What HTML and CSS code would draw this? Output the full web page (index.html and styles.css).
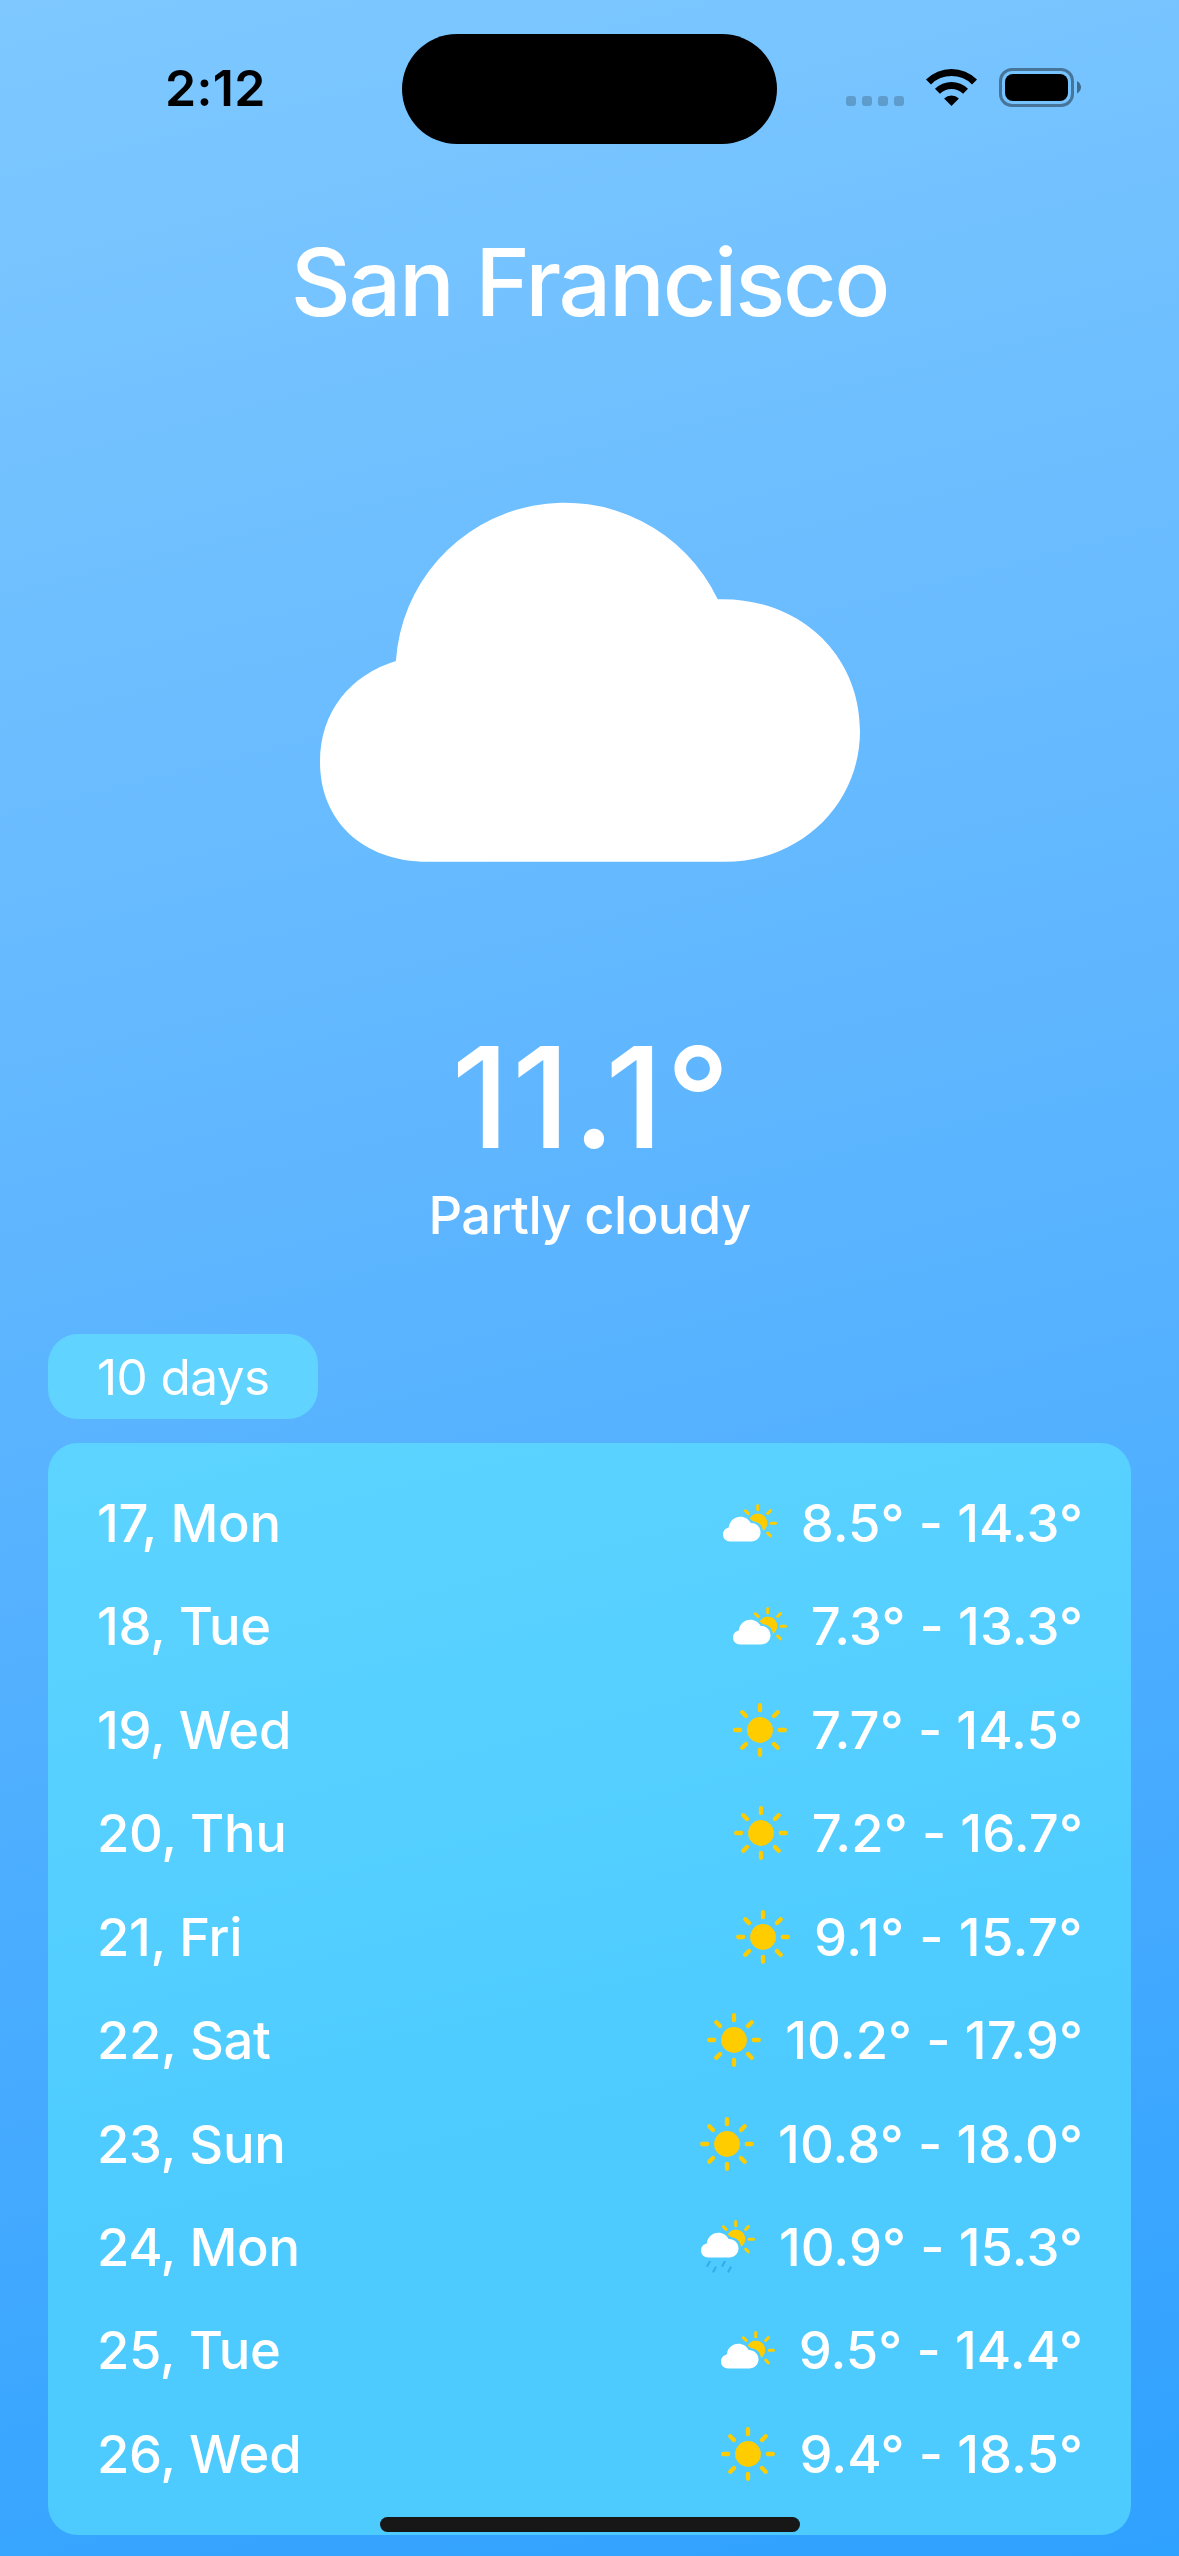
FILE: index.html
```html
<!DOCTYPE html>
<html lang="en">
<head>
<meta charset="utf-8">
<title>Weather</title>
<link rel="stylesheet" href="styles.css">
</head>
<body>
<svg class="sprite" width="0" height="0" aria-hidden="true">
  <defs>
    <symbol id="sun" viewBox="0 0 54 54">
      <circle cx="27" cy="27" r="12.9" fill="#ffcc00"/>
      <path d="M27 2.2v5M27 46.8v5M2.2 27h5M46.8 27h5M9.3 9.3l3.7 3.7M41 41l3.7 3.7M9.3 44.7l3.7-3.7M41 13l3.7-3.7" stroke="#ffcc00" stroke-width="4.3" stroke-linecap="round"/>
    </symbol>
    <symbol id="cloud-sun" viewBox="0 0 54 38">
      <path d="M26.5 14.7A9.4 9.4 0 1 1 40 26.9C39.6 21.400 35.300 17.400 30 17.200C29 16 27.800 15.100 26.500 14.700z" fill="#ffcc00"/>
      <path d="M34.700 1.500v4.200M48.200 19.300h4.300M22.400 6.700l2.700 2.700M44.600 9.500l2.900-2.900M44.700 29.100l2.700 2.700" stroke="#ffcc00" stroke-width="3" stroke-linecap="round"/>
      <path d="M7.300 37.400C3 37.400 0 34.600 0 30.500c0-3.600 2.200-6.200 5.700-7C6.500 17 11.500 12.800 17.200 12.800c4.700 0 8.500 2.500 10.400 6.100 5.600-.1 9.900 3.900 9.900 9.300s-4 9.200-9.400 9.200z" fill="#fff"/>
    </symbol>
    <symbol id="cloud-sun-rain" viewBox="0 0 54 54">
      <use href="#cloud-sun" width="54" height="38"/>
      <path d="M8.700 41.800l-2.300 4M23.700 41.800l-2.300 4M14.700 47.500l-2.300 4M29.700 47.500l-2.300 4" stroke="#32ade6" stroke-width="2.200" stroke-linecap="round"/>
    </symbol>
  </defs>
</svg>
<main class="screen">
  <header class="status">
    <span class="time">2:12</span>
    <div class="island"></div>
    <div class="indicators">
      <div class="signal"><i></i><i></i><i></i><i></i></div>
      <svg class="wifi" width="51" height="38" viewBox="0 0 51 38">
        <path d="M25.500 38l-7.400-7.500a10.700 10.700 0 0 1 14.800 0z"/>
        <path d="M9 20.800a23.500 23.500 0 0 1 33 0l-4.900 5a16.600 16.600 0 0 0-23.200 0z"/>
        <path d="M0 11.500a36 36 0 0 1 51 0l-5 4.900a29 29 0 0 0-41 0z"/>
      </svg>
      <svg class="battery" width="83" height="39" viewBox="0 0 83 39">
        <rect x="1.500" y="1.500" width="72" height="36" rx="11.500" fill="none" stroke="#000" stroke-opacity=".4" stroke-width="3"/>
        <rect x="6" y="6" width="63" height="27" rx="8"/>
        <path d="M78 13c5.300 2.500 5.300 10 0 12.500z" fill-opacity=".45"/>
      </svg>
    </div>
  </header>
  <section class="current">
    <h1 class="city">San Francisco</h1>
    <svg class="hero" width="540" height="360" viewBox="320 502 540 360">
      <path d="M428 861.800C362 861.800 320 820 320 762C320 712 350 675 395.900 661A169.300 169.300 0 0 1 717.700 599.200C800 597 860 655 860 731C860 804 801 861.800 725 861.800Z" fill="#fff"/>
    </svg>
    <div class="temperature">11.1°</div>
    <div class="condition">Partly cloudy</div>
  </section>
  <section class="forecast">
    <h2 class="range">10 days</h2>
    <ul class="days">
      <li class="day"><span>17, Mon</span><span class="reading"><svg class="icon" height="38"><use href="#cloud-sun"/></svg><span class="temps">8.5° - 14.3°</span></span></li>
      <li class="day"><span>18, Tue</span><span class="reading"><svg class="icon" height="38"><use href="#cloud-sun"/></svg><span class="temps">7.3° - 13.3°</span></span></li>
      <li class="day"><span>19, Wed</span><span class="reading"><svg class="icon" height="54"><use href="#sun"/></svg><span class="temps">7.7° - 14.5°</span></span></li>
      <li class="day"><span>20, Thu</span><span class="reading"><svg class="icon" height="54"><use href="#sun"/></svg><span class="temps">7.2° - 16.7°</span></span></li>
      <li class="day"><span>21, Fri</span><span class="reading"><svg class="icon" height="54"><use href="#sun"/></svg><span class="temps loose">9.1° - 15.7°</span></span></li>
      <li class="day"><span>22, Sat</span><span class="reading"><svg class="icon" height="54"><use href="#sun"/></svg><span class="temps">10.2° - 17.9°</span></span></li>
      <li class="day"><span>23, Sun</span><span class="reading"><svg class="icon" height="54"><use href="#sun"/></svg><span class="temps">10.8° - 18.0°</span></span></li>
      <li class="day"><span>24, Mon</span><span class="reading"><svg class="icon" height="54"><use href="#cloud-sun-rain"/></svg><span class="temps">10.9° - 15.3°</span></span></li>
      <li class="day"><span>25, Tue</span><span class="reading"><svg class="icon" height="38"><use href="#cloud-sun"/></svg><span class="temps">9.5° - 14.4°</span></span></li>
      <li class="day"><span>26, Wed</span><span class="reading"><svg class="icon" height="54"><use href="#sun"/></svg><span class="temps">9.4° - 18.5°</span></span></li>
    </ul>
  </section>
  <div class="home-indicator"></div>
</main>
</body>
</html>
```

FILE: styles.css
```css
* {
  box-sizing: border-box;
  margin: 0;
  padding: 0;
}

body {
  font-family: Inter, "Liberation Sans", sans-serif;
  color: #fff;
}

.sprite {
  position: absolute;
}

.screen {
  position: relative;
  width: 1179px;
  height: 2556px;
  overflow: hidden;
  background: linear-gradient(166deg, #7ec8ff 0%, #5db5ff 47%, #2fa1ff 100%);
}

.status {
  display: grid;
  grid-template-columns: 402px 375px 402px;
  height: 177px;
  padding-top: 33px;
  color: #000;
}

.time {
  height: 111px;
  padding-left: 165px;
  font-size: 50px;
  font-weight: 600;
  line-height: 110px;
  letter-spacing: 0.3px;
}

.island {
  height: 110px;
  margin-top: 1px;
  border-radius: 55px;
  background: #000;
}

.indicators {
  display: flex;
  align-items: flex-end;
  height: 74px;
  padding-left: 69px;
}

.signal {
  display: flex;
  gap: 6px;
  margin: 0 12px 1px 0;
}

.signal i {
  width: 10px;
  height: 10px;
  border-radius: 3px;
  background: rgba(0, 0, 0, 0.2);
}

.wifi {
  margin: 0 22px 1px 10px;
}

.current {
  display: flex;
  flex-direction: column;
  align-items: center;
  height: 1157px;
}

.city {
  margin-top: 46px;
  font-size: 93px;
  font-weight: 500;
  line-height: 118px;
  letter-spacing: -2.3px;
}

.hero {
  margin-top: 161px;
}

.temperature {
  margin-top: 149px;
  padding-left: 5px;
  font-size: 140px;
  font-weight: 550;
  line-height: 172px;
  letter-spacing: 2.5px;
}

.condition {
  font-size: 52.500px;
  font-weight: 500;
  line-height: 64px;
  letter-spacing: -0.6px;
}

.forecast {
  padding: 0 48px;
}

.range {
  width: 270px;
  height: 85px;
  padding-left: 49px;
  border-radius: 30px;
  background: #60d3ff;
  font-size: 49.500px;
  font-weight: 400;
  line-height: 86px;
  letter-spacing: -0.6px;
}

.days {
  height: 1092px;
  margin-top: 24px;
  padding: 28.200px 48px 0 49px;
  border-radius: 30px;
  background: linear-gradient(166deg, #5dd4ff 0%, #4dcbff 60%, #4dcbff 100%);
  list-style: none;
  font-size: 52.500px;
  font-weight: 500;
  letter-spacing: -0.3px;
}

.day {
  display: flex;
  align-items: center;
  justify-content: space-between;
  height: 103.440px;
}

.reading {
  display: flex;
  align-items: center;
  gap: 24px;
}

.temps {
  letter-spacing: 0.1px;
  font-feature-settings: "calt" 0;
}

.temps.loose {
  letter-spacing: 0.5px;
}

.icon {
  width: 54px;
}

.home-indicator {
  position: absolute;
  left: 380px;
  bottom: 24px;
  width: 420px;
  height: 15px;
  border-radius: 8px;
  background: #171717;
}
```
